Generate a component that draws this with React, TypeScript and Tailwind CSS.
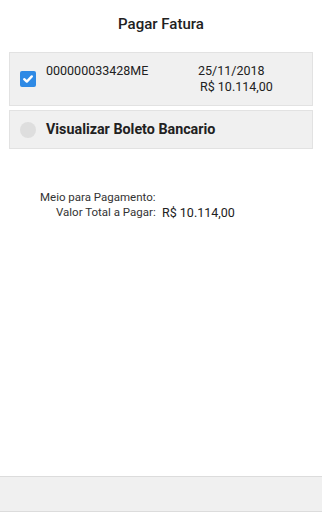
import React from "react";

export default function App() {
  return (
    <div className="w-[322px] h-[512px] bg-white flex flex-col text-[#212121]" style={{ fontFamily: "Roboto, 'Liberation Sans', sans-serif" }}>
      <div className="h-[48px] flex items-center justify-center text-[15px] font-medium pt-[1px]">Pagar Fatura</div>
      <div className="px-[9px] pt-[4px] flex flex-col gap-[4px]">
        <div className="h-[54px] bg-[#f0f0f0] border border-[#e2e2e2] flex items-start">
          <div className="w-[36px] h-full flex items-center pl-[10px]">
            <div className="w-[16px] h-[16px] rounded-[2px] bg-[#2f8ae5] flex items-center justify-center">
              <svg width="12" height="12" viewBox="0 0 12 12"><path d="M2.2 6.2 L4.8 8.6 L9.8 3.4" fill="none" stroke="white" strokeWidth="2.4" strokeLinecap="round" strokeLinejoin="round" /></svg>
            </div>
          </div>
          <div className="pt-[10px] text-[12.5px] leading-[16px] w-[152px]">000000033428ME</div>
          <div className="pt-[10px] text-[12.5px] leading-[16px]">
            <div>25/11/2018</div>
            <div className="pl-[2px]">R$ 10.114,00</div>
          </div>
        </div>
        <div className="h-[39px] bg-[#f0f0f0] border border-[#e2e2e2] flex items-center">
          <div className="w-[36px] pl-[10px]">
            <div className="w-[16px] h-[16px] rounded-full bg-[#dedede]"></div>
          </div>
          <div className="text-[14.3px] font-bold">Visualizar Boleto Bancario</div>
        </div>
      </div>
      <div className="pt-[41px] pl-[40px] text-[11.5px] text-[#333] leading-[15px]">
        <div>Meio para Pagamento:</div>
        <div className="flex items-end">
          <div className="pl-[16px] w-[122px]">Valor Total a Pagar:</div>
          <div className="text-[12.5px] text-[#212121]">R$ 10.114,00</div>
        </div>
      </div>
      <div className="flex-1"></div>
      <div className="h-[36px] bg-[#f0f0f0] border-t border-[#dcdcdc] border-b"></div>
    </div>
  );
}
